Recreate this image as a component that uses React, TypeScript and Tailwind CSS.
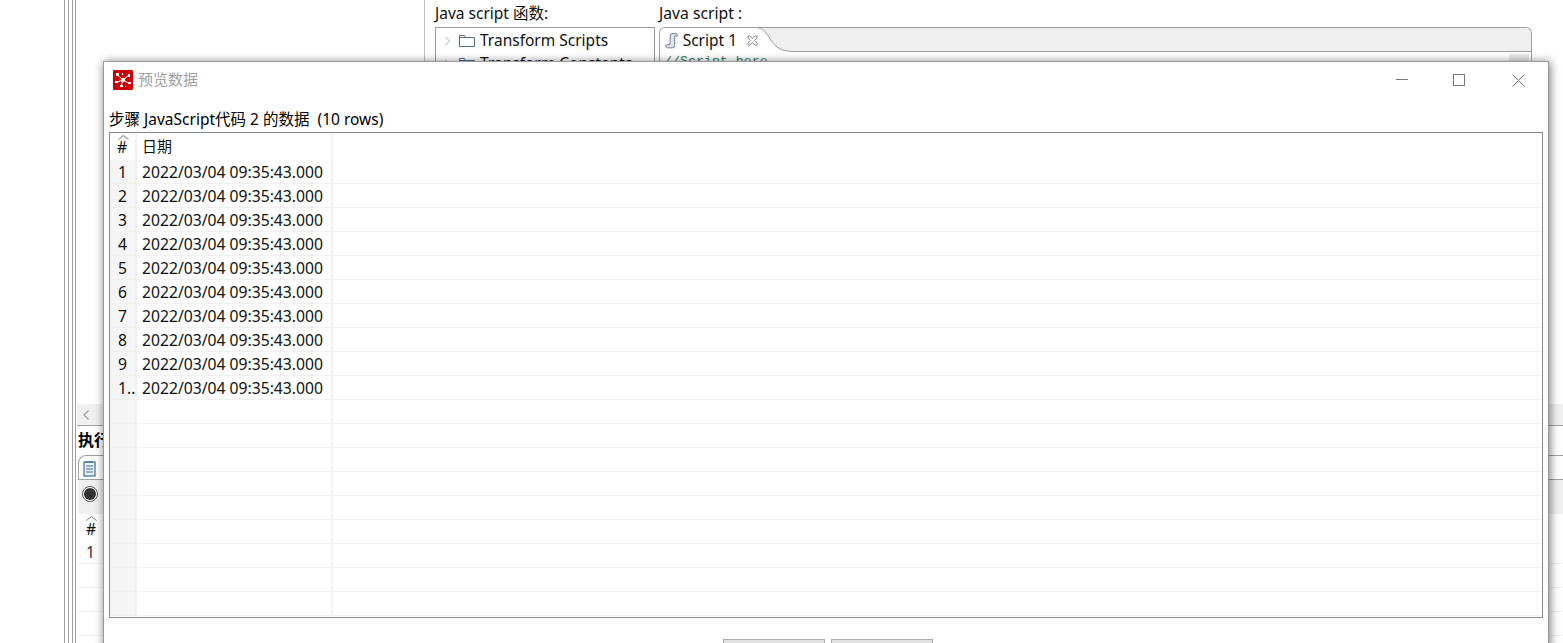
const rows = ["1", "2", "3", "4", "5", "6", "7", "8", "9", "1.."];
const stamp = "2022/03/04 09:35:43.000";

function Folder() {
  return (
    <svg width="16" height="14" viewBox="0 0 16 14" fill="none" stroke="#4f6d85" strokeWidth="1">
      <path d="M.5 12.5v-11h5l1 2h9v9z" />
      <path d="M.5 3.5h6" />
    </svg>
  );
}

function Chevron() {
  return (
    <svg width="8" height="10" viewBox="0 0 8 10" fill="none" stroke="#aaa">
      <path d="M1.500 1l4 4-4 4" />
    </svg>
  );
}

function SortCaret() {
  return (
    <svg width="11" height="5" viewBox="0 0 11 5" fill="none" stroke="#777">
      <path d="M.5 4.500l5-4 5 4" />
    </svg>
  );
}

function AppLogo() {
  return (
    <svg width="20" height="20" viewBox="0 0 20 20">
      <rect width="20" height="20" rx="1" fill="#cc0000" />
      <path d="M4.500 5l5.500 5M15.500 5.500L10 10M10 10l-6 2M10 10l5.500 3M10 10l-1.500 5" stroke="#fff" strokeWidth="1" />
      <circle cx="10" cy="10" r="2.200" fill="#fff" />
      <path fill="#fff" d="M3 3h3v3H3zM15 4h2v3h-2zM2 11h3v2H2zM15 12h3v2h-3zM7 15h3v2H7zM12 16h1v1h-1zM9 3h1v2H9z" />
    </svg>
  );
}

function DataRow({ n, value }: { n?: string; value?: string }) {
  return (
    <div className="flex h-6 shrink-0 border-b border-[#f0f0f0]">
      <div className="w-[25px] shrink-0 bg-[#f5f5f5] pl-[8px] leading-[24px]">{n}</div>
      <div className="w-[198px] shrink-0 whitespace-nowrap border-x-2 border-[#eef1f5] pl-[5px] leading-[24px]">{value}</div>
    </div>
  );
}

function Dialog() {
  return (
    <div className="absolute left-[103px] top-[61px] flex h-[600px] w-[1446px] flex-col border border-[#9a9a9a] bg-white shadow-[1px_1px_9px_rgba(0,0,0,0.55)]">
      <div className="flex h-[36px] shrink-0 items-center pl-[9px]">
        <AppLogo />
        <span className="mb-[2px] ml-[5px] text-[15px] text-[#a0a0a0]">预览数据</span>
        <div className="ml-auto flex items-center">
          <div className="mb-[1px] mr-[45px] h-px w-3 bg-[#777]" />
          <div className="mr-[47px] h-3 w-3 border border-[#777]" />
          <svg className="mr-[23px]" width="13" height="13" viewBox="0 0 13 13" stroke="#777" fill="none">
            <path d="M.5.5l12 12M12.500.5l-12 12" />
          </svg>
        </div>
      </div>
      <div className="h-[34px] shrink-0 whitespace-nowrap pl-[5px] pt-[11px] text-[15.500px] leading-[20px] text-black">
        步骤 JavaScript代码 2 的数据&nbsp; (10 rows)
      </div>
      <div className="mx-[5px] flex h-[486px] shrink-0 flex-col overflow-hidden border border-[#858a91] text-[15.700px] text-[#111]">
        <div className="flex h-[27px] shrink-0">
          <div className="relative w-[25px] shrink-0 pl-[7px] pt-[4px] leading-[20px]">
            <div className="absolute left-[8px] top-[2px]">
              <SortCaret />
            </div>
            #
          </div>
          <div className="w-[198px] shrink-0 border-x-2 border-[#eef1f5] pl-[5px] pt-[3px] text-[15px] leading-[20px]">日期</div>
        </div>
        {rows.map((n) => (
          <DataRow key={n} n={n} value={stamp} />
        ))}
        {[0, 1, 2, 3, 4, 5, 6, 7, 8].map((i) => (
          <DataRow key={i} />
        ))}
      </div>
      <div className="flex justify-center gap-[6px] pl-[4px] pt-[21px]">
        <div className="h-6 w-[102px] border border-[#adadad] bg-[#e1e1e1]" />
        <div className="h-6 w-[102px] border border-[#adadad] bg-[#e1e1e1]" />
      </div>
    </div>
  );
}

export default function App() {
  return (
    <div className="relative flex h-[643px] w-[1563px] overflow-hidden bg-white font-['Noto_Sans','Noto_Sans_CJK_SC',sans-serif]">
      {/* sash lines on the left */}
      <div className="ml-[64px] flex h-full w-[13px] shrink-0 gap-[3px]">
        <div className="w-px bg-[#a0a0a0]" />
        <div className="w-px bg-[#a0a0a0]" />
        <div className="w-px bg-[#a0a0a0]" />
        <div className="-ml-px w-px bg-[#a0a0a0]" />
      </div>

      <div className="flex min-w-0 flex-1 flex-col">
        <div className="flex h-[404px] shrink-0">
          <div className="w-[347px] shrink-0" />
          <div className="flex flex-1 border-l border-[#c0c0c0] pl-[10px]">
            <div className="w-[224px] shrink-0">
              <div className="h-[27px] whitespace-nowrap pt-[3px] text-[15.500px] leading-[20px] text-[#111]">Java script 函数:</div>
              <div className="h-[60px] w-[220px] border border-[#9a9a9a] pt-px text-[15.500px] text-[#111]">
                <div className="flex h-[24px] items-center pl-[8px]">
                  <Chevron />
                  <span className="ml-[7px]">
                    <Folder />
                  </span>
                  <span className="ml-[5px] whitespace-nowrap">Transform Scripts</span>
                </div>
                <div className="-mt-px flex h-[24px] items-center pl-[8px]">
                  <Chevron />
                  <span className="ml-[7px]">
                    <Folder />
                  </span>
                  <span className="ml-[5px] whitespace-nowrap">Transform Constants</span>
                </div>
              </div>
            </div>
            <div className="w-[873px] shrink-0">
              <div className="h-[27px] whitespace-nowrap pt-[3px] text-[15.700px] leading-[20px] text-[#111]">Java script :</div>
              <div className="h-[60px] rounded-t-[6px] border border-b-0 border-[#a0a0a0]">
                <div className="flex h-[24px] rounded-t-[6px] border-b border-[#a0a0a0] bg-[#efefef]">
                  <div className="-mb-px flex w-[98px] shrink-0 items-center rounded-tl-[6px] bg-white pl-[5px] pt-px text-[15.500px] text-[#111]">
                    <svg width="14" height="16" viewBox="0 0 14 16" fill="none" stroke="#6b7c8c">
                      <path d="M5.500 1.500a1.500 1.500 0 0 1 1.500-1h4.500a1.500 1.500 0 0 1 1 2.500H10v9.500a2.500 2.500 0 0 1-2.500 2.500H2.500a1.800 1.800 0 0 1-1-3.200H5z" fill="#dfe5ea" />
                    </svg>
                    <span className="ml-[4px] whitespace-nowrap">Script 1</span>
                    <svg className="ml-[10px] shrink-0" width="11" height="11" viewBox="0 0 11 11" fill="none" stroke="#888">
                      <path d="M1 1h2l2.500 2.500L8 1h2v2L7.500 5.500 10 8v2H8L5.500 7.500 3 10H1V8l2.500-2.500L1 3z" />
                    </svg>
                  </div>
                  {/* curved right edge of the active tab */}
                  <svg className="-mb-px shrink-0" width="32" height="24" viewBox="0 0 32 24">
                    <path d="M0 0H1C10 0 13 23 30 23H32V24H0z" fill="#fff" />
                    <path d="M0 0H1C10 0 13 23 30 23H32" fill="none" stroke="#a0a0a0" />
                  </svg>
                </div>
                <div className="flex justify-between">
                  <div className="pl-[4px] font-['Liberation_Mono',monospace] text-[13.300px] leading-[20px] text-[#3f7f5f]">//Script here</div>
                  <div className="mr-[2px] mt-[2px] h-[20px] w-[20px] bg-[#e9e9e9]" />
                </div>
              </div>
            </div>
          </div>
        </div>

        {/* execution results panel behind the dialog */}
        <div className="flex h-[22px] shrink-0 items-center border-b border-[#a0a0a0] bg-[#f0f0f0] pl-[5px]">
          <svg width="8" height="12" viewBox="0 0 8 12" fill="none" stroke="#aaa" strokeWidth="1.500">
            <path d="M6.500 1.500L2 6l4.500 4.500" />
          </svg>
        </div>
        <div className="h-[29px] shrink-0 pl-px pt-[1px] text-[16px] font-bold leading-[26px] text-black">执行</div>
        <div className="ml-px flex h-[25px] shrink-0 items-center rounded-tl-[8px] border-b border-l border-t border-[#a0a0a0] pl-[4px] pt-px">
          <svg width="13" height="17" viewBox="0 0 13 17" fill="#e8f0f5" stroke="#3f6f92" strokeWidth="1.200">
            <rect x="1" y="2" width="11" height="14" />
            <path d="M3 6h7M3 9h7M3 12h7M3 1v2M5 1v2M7 1v2M9 1v2" />
          </svg>
        </div>
        <div className="ml-px flex h-[34px] shrink-0 items-center bg-[#f0f0f0] pb-[6px] pl-[4px]">
          <div className="flex h-4 w-4 items-center justify-center rounded-full border border-[#555] bg-white">
            <div className="h-3 w-3 rounded-full bg-[#333]" />
          </div>
        </div>
        <div className="flex flex-1 flex-col">
          <div className="relative ml-[3px] h-[26px] w-[24px] shrink-0 pl-[6px] pt-[5px] text-[15.700px] leading-[20px] text-[#111]">
            <div className="absolute left-[6px] top-[2px]">
              <SortCaret />
            </div>
            #
          </div>
          {["1", "", "", ""].map((n, i) => (
            <div key={i} className="h-6 shrink-0 border-b border-[#f0f0f0] pl-[9px] text-[15.700px] leading-[24px] text-[#333]">
              {n}
            </div>
          ))}
        </div>
      </div>

      <Dialog />
    </div>
  );
}
